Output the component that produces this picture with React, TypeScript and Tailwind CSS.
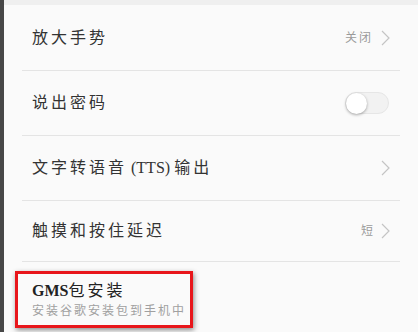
import React from 'react';

const font = { fontFamily: '"Liberation Serif", "Noto Sans CJK SC", serif' };

function Chevron() {
  return (
    <svg width="9" height="16" viewBox="0 0 9 16" className="shrink-0">
      <polyline points="1,1 8,8 1,15" fill="none" stroke="#c4c4c4" strokeWidth="1.2" />
    </svg>
  );
}

function Row({ label, right, height }: { label: React.ReactNode; right?: React.ReactNode; height: string }) {
  return (
    <div className={`flex items-center justify-between pl-[32px] pr-[28px] ${height}`}>
      <span className="text-[16px] tracking-[3px] text-[#333]">{label}</span>
      {right}
    </div>
  );
}

function Divider() {
  return <div className="mx-[22px] mr-[18px] h-px bg-[#e4e4e4]" />;
}

export default function App() {
  return (
    <div className="flex h-[332px] w-[418px] overflow-hidden bg-[#fafafa]" style={font}>
      <div className="w-[4px] shrink-0 bg-[#474747]" />
      <div className="flex flex-1 flex-col">
        <div className="h-[5px] bg-[#efefef]" />
        <Row
          label="放大手势"
          height="h-[65px] -ml-[4px]"
          right={
            <div className="flex items-center gap-[8px]">
              <span className="text-[12px] tracking-[2px] text-[#9a9a9a]">关闭</span>
              <Chevron />
            </div>
          }
        />
        <div className="-ml-[4px]"><Divider /></div>
        <Row
          label="说出密码"
          height="h-[64px] -ml-[4px]"
          right={
            <div className="mr-[1px] flex h-[22px] w-[44px] items-center rounded-full border border-[#e6e6e6] bg-[#f2f2f2]">
              <div className="h-[21px] w-[21px] rounded-full bg-white shadow-[0_1px_3px_rgba(0,0,0,0.35)]" />
            </div>
          }
        />
        <div className="-ml-[4px]"><Divider /></div>
        <Row
          label={
            <>
              文字转语音<span className="tracking-normal"> (TTS) </span>输出
            </>
          }
          height="h-[64px] -ml-[4px]"
          right={<Chevron />}
        />
        <div className="-ml-[4px]"><Divider /></div>
        <Row
          label="触摸和按住延迟"
          height="h-[60px] -ml-[4px]"
          right={
            <div className="flex items-center gap-[8px]">
              <span className="text-[12px] text-[#9a9a9a]">短</span>
              <Chevron />
            </div>
          }
        />
        <div className="-ml-[4px]"><Divider /></div>
        <div className="ml-[11px] mt-[9px] flex h-[57px] w-[178px] flex-col justify-center border-[3px] border-[#e8161b] pl-[14px] shadow-[1px_2px_5px_rgba(0,0,0,0.45)]">
          <span className="text-[16px] font-bold leading-[20px] text-[#222]">
            GMS<span className="font-normal tracking-[3px]">包安装</span>
          </span>
          <span className="mt-[2px] text-[12px] leading-[16px] tracking-[2px] text-[#a0a0a0]">安装谷歌安装包到手机中</span>
        </div>
      </div>
    </div>
  );
}
